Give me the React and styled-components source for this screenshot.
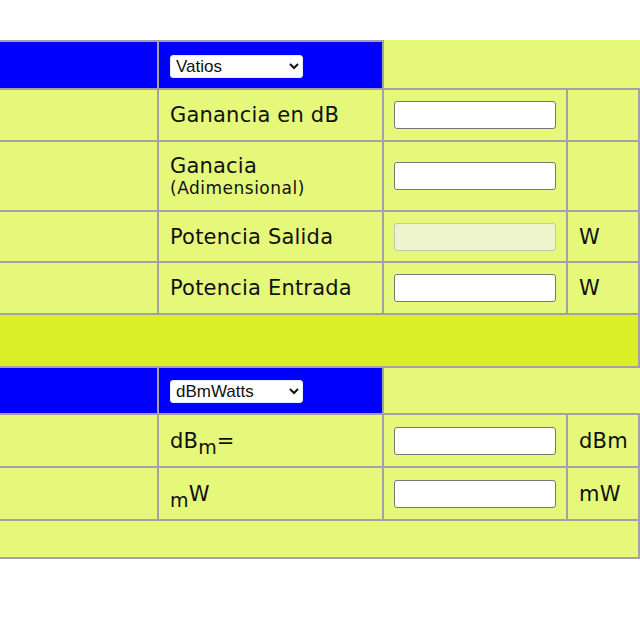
import React from "react";
import styled, { createGlobalStyle } from "styled-components";

const GlobalStyle = createGlobalStyle`
  html, body {
    margin: 0;
    padding: 0;
    background: #ffffff;
    font-family: "DejaVu Sans", Verdana, sans-serif;
  }
  body {
    width: 640px;
    height: 640px;
    overflow: hidden;
  }
`;

const Page = styled.div`
  padding-top: 40px;
  overflow: hidden;
`;

const Table = styled.table`
  border-collapse: collapse;
  table-layout: fixed;
  width: 740px;
  margin-left: -102px;
  background: #e5f87a;
  color: #111;
  font-size: 21px;
  letter-spacing: 0.2px;
`;

const Cell = styled.td`
  border: 2px solid #a2a2a2;
  padding: 0 10px;
  height: ${({ h }) => h || 48}px;
  vertical-align: middle;
  background: ${({ tone }) =>
    tone === "blue" ? "#0000ff" : tone === "band" ? "#dcf02a" : "#e5f87a"};
  box-sizing: border-box;
`;

const TopCell = styled(Cell)`
  border-top: none;
  border-right: none;
`;

const Label = styled.div`
  line-height: 24px;
  padding-left: 1px;
`;

const Small = styled.span`
  display: block;
  font-size: 17px;
  letter-spacing: 0.5px;
  line-height: 20px;
`;

const Sub = styled.sub`
  font-size: 19px;
  vertical-align: -6px;
  line-height: 0;
`;

const Unit = styled.span`
  padding-left: 1px;
`;

const Select = styled.select`
  width: 133px;
  height: 23px;
  font-family: "Liberation Sans", Arial, sans-serif;
  font-size: 17px;
  letter-spacing: 0;
  padding: 0 1px;
  border: 1px solid #e8e8ff;
  border-radius: 3px;
  background: #ffffff;
  color: #111;
  margin-left: 1px;
`;

const Field = styled.input`
  display: block;
  width: 162px;
  height: 28px;
  box-sizing: border-box;
  border: 1px solid ${({ disabled }) => (disabled ? "#c4c9a6" : "#767676")};
  border-radius: 3px;
  background: ${({ disabled }) => (disabled ? "#eef5cc" : "#ffffff")};
  font-size: 16px;
  padding: 0 4px;
`;

const Row = ({ label, unit, disabled, h }) => (
  <tr>
    <Cell h={h} />
    <Cell h={h}>
      <Label>{label}</Label>
    </Cell>
    <Cell h={h}>
      <Field type="text" disabled={disabled} />
    </Cell>
    <Cell h={h}>
      <Unit>{unit}</Unit>
    </Cell>
  </tr>
);

const Header = ({ value, options, h }) => (
  <tr>
    <Cell tone="blue" h={h} />
    <Cell tone="blue" h={h}>
      <Select defaultValue={value}>
        {options.map((o) => (
          <option key={o}>{o}</option>
        ))}
      </Select>
    </Cell>
    <TopCell colSpan={2} h={h} />
  </tr>
);

export default function App() {
  return (
    <Page>
      <GlobalStyle />
      <Table>
        <colgroup>
          <col style={{ width: 259 }} />
          <col style={{ width: 225 }} />
          <col style={{ width: 184 }} />
          <col style={{ width: 72 }} />
        </colgroup>
        <tbody>
          <Header value="Vatios" options={["Vatios", "dBmWatts"]} h={48} />
          <Row label="Ganancia en dB" h={52} />
          <Row
            h={70}
            label={
              <>
                Ganacia
                <Small>(Adimensional)</Small>
              </>
            }
          />
          <Row label="Potencia Salida" unit="W" disabled h={51} />
          <Row label="Potencia Entrada" unit="W" h={52} />
          <tr>
            <Cell tone="band" colSpan={4} h={53} />
          </tr>
          <Header value="dBmWatts" options={["Vatios", "dBmWatts"]} h={47} />
          <Row
            h={53}
            label={
              <>
                dB<Sub>m</Sub>=
              </>
            }
            unit="dBm"
          />
          <Row
            h={53}
            label={
              <>
                <Sub>m</Sub>W
              </>
            }
            unit="mW"
          />
          <tr>
            <Cell colSpan={4} h={38} />
          </tr>
        </tbody>
      </Table>
    </Page>
  );
}
